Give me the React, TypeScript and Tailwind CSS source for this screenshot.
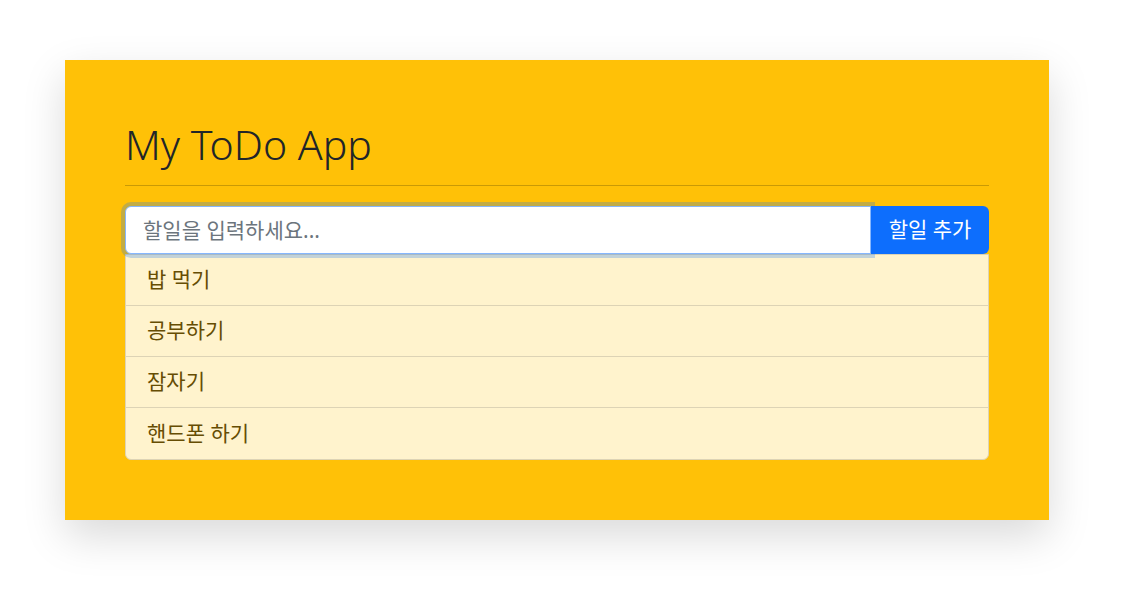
import React, { useState } from "react";

const initialTodos = ["밥 먹기", "공부하기", "잠자기", "핸드폰 하기"];

const App: React.FC = () => {
  const [todos, setTodos] = useState<string[]>(initialTodos);
  const [text, setText] = useState("");

  const addTodo = () => {
    if (!text.trim()) return;
    setTodos([...todos, text.trim()]);
    setText("");
  };

  return (
    <div
      className="min-h-screen bg-white pt-[60px] pl-[65px]"
      style={{ fontFamily: '"Noto Sans", "Noto Sans CJK KR", sans-serif' }}
    >
      <div className="w-[984px] bg-[#ffc107] px-[60px] pt-[60px] pb-[60px] shadow-[0_16px_40px_rgba(0,0,0,0.15)]">
        <h1 className="h-[48px] text-[41px] leading-[48px] font-light text-[#212529] mb-[17px]">
          My ToDo App
        </h1>
        <hr className="border-0 border-t border-[#c99a05] mb-[20px]" />
        <div className="flex h-[48px]">
          <input
            type="text"
            value={text}
            onChange={(e) => setText(e.target.value)}
            placeholder="할일을 입력하세요..."
            className="relative z-10 flex-1 h-[48px] rounded-l-[6px] border border-[#86b7fe] bg-white px-[17px] text-[21px] text-[#212529] outline-none placeholder:text-[#6c757d] shadow-[0_0_0_4px_rgba(13,110,253,0.25)]"
          />
          <button
            onClick={addTodo}
            className="relative z-20 w-[118px] h-[48px] rounded-r-[6px] bg-[#0d6efd] text-[21px] text-white"
          >
            할일 추가
          </button>
        </div>
        <ul className="border border-[#ddd3b5] rounded-b-[6px] bg-[#fff3cd] overflow-hidden">
          {todos.map((todo, i) => (
            <li
              key={i}
              className={`h-[51px] flex items-center px-[21px] text-[21px] text-[#664d03] ${
                i < todos.length - 1 ? "border-b border-[#ddd3b5]" : ""
              }`}
            >
              {todo}
            </li>
          ))}
        </ul>
      </div>
    </div>
  );
};

export default App;
